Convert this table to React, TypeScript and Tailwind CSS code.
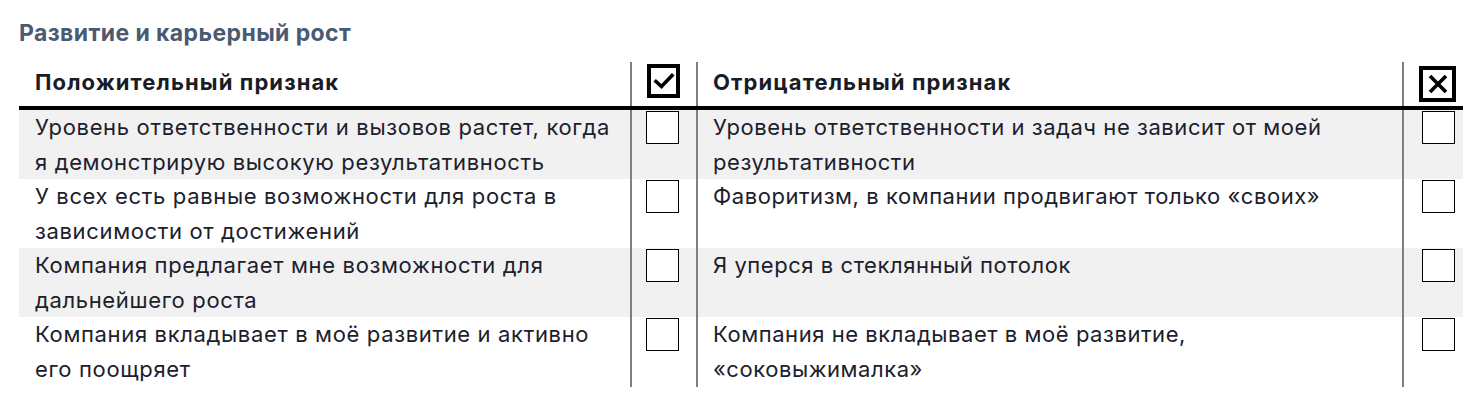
const rows = [
  {
    pos: ['Уровень ответственности и вызовов растет, когда', 'я демонстрирую высокую результативность'],
    neg: ['Уровень ответственности и задач не зависит от моей', 'результативности'],
  },
  {
    pos: ['У всех есть равные возможности для роста в', 'зависимости от достижений'],
    neg: ['Фаворитизм, в компании продвигают только «своих»'],
  },
  {
    pos: ['Компания предлагает мне возможности для', 'дальнейшего роста'],
    neg: ['Я уперся в стеклянный потолок'],
  },
  {
    pos: ['Компания вкладывает в моё развитие и активно', 'его поощряет'],
    neg: ['Компания не вкладывает в моё развитие,', '«соковыжималка»'],
  },
];

function CheckHeader() {
  return (
    <div className="w-[33px] h-[34px] border-[4px] border-black flex items-center justify-center">
      <svg width="22" height="18" viewBox="0 0 22 18" fill="none">
        <path d="M3 9.5 L8.5 14.5 L19 3.5" stroke="black" strokeWidth="3.6" strokeLinecap="square" />
      </svg>
    </div>
  );
}

function CrossHeader() {
  return (
    <div className="w-[37px] h-[36px] border-[4px] border-black flex items-center justify-center">
      <svg width="20" height="20" viewBox="0 0 20 20" fill="none">
        <path d="M2 2 L18 18 M18 2 L2 18" stroke="black" strokeWidth="3.6" />
      </svg>
    </div>
  );
}

function Lines({ lines }: { lines: string[] }) {
  return (
    <>
      {lines.map((l) => (
        <div key={l} className="whitespace-nowrap">
          {l}
        </div>
      ))}
    </>
  );
}

export default function App() {
  return (
    <div className="w-[1478px] h-[402px] bg-white pl-[19px] pt-[18px] font-['Inter',sans-serif] text-[#1b202c]">
      <h2 className="text-[23px] leading-[30px] font-bold tracking-[0.4px] text-[#4a5a70]">Развитие и карьерный рост</h2>

      <div className="w-[1444px] mt-[14px]">
        {/* header */}
        <div className="grid grid-cols-[613px_66px_706px_59px] h-[48px] border-b-[4px] border-black">
          <div className="border-r-2 border-[#7f7f7f] pl-[16px] pt-[5px] text-[22px] leading-[30px] font-bold tracking-[1.1px] text-[#181c26]">
            Положительный признак
          </div>
          <div className="border-r-2 border-[#7f7f7f] pl-[15px] pt-[2px]">
            <CheckHeader />
          </div>
          <div className="border-r-2 border-[#7f7f7f] pl-[15px] pt-[5px] text-[22px] leading-[30px] font-bold tracking-[1.1px] text-[#181c26]">
            Отрицательный признак
          </div>
          <div className="pl-[15px] pt-[4px]">
            <CrossHeader />
          </div>
        </div>

        {rows.map((r, i) => (
          <div
            key={i}
            className={`grid grid-cols-[613px_66px_706px_59px] h-[69px] ${i % 2 === 0 ? 'bg-[#f1f1f1]' : 'bg-white'}`}
          >
            <div className="border-r-2 border-[#7f7f7f] pl-[16px] text-[22px] leading-[35px] tracking-[0.65px]">
              <Lines lines={r.pos} />
            </div>
            <div className="border-r-2 border-[#7f7f7f] pl-[14px] pt-[1px]">
              <div className="w-[33px] h-[33px] border border-black bg-white" />
            </div>
            <div className="border-r-2 border-[#7f7f7f] pl-[15px] text-[22px] leading-[35px] tracking-[0.55px]">
              <Lines lines={r.neg} />
            </div>
            <div className="pl-[18px] pt-[1px]">
              <div className="w-[33px] h-[33px] border border-black bg-white" />
            </div>
          </div>
        ))}
      </div>
    </div>
  );
}
